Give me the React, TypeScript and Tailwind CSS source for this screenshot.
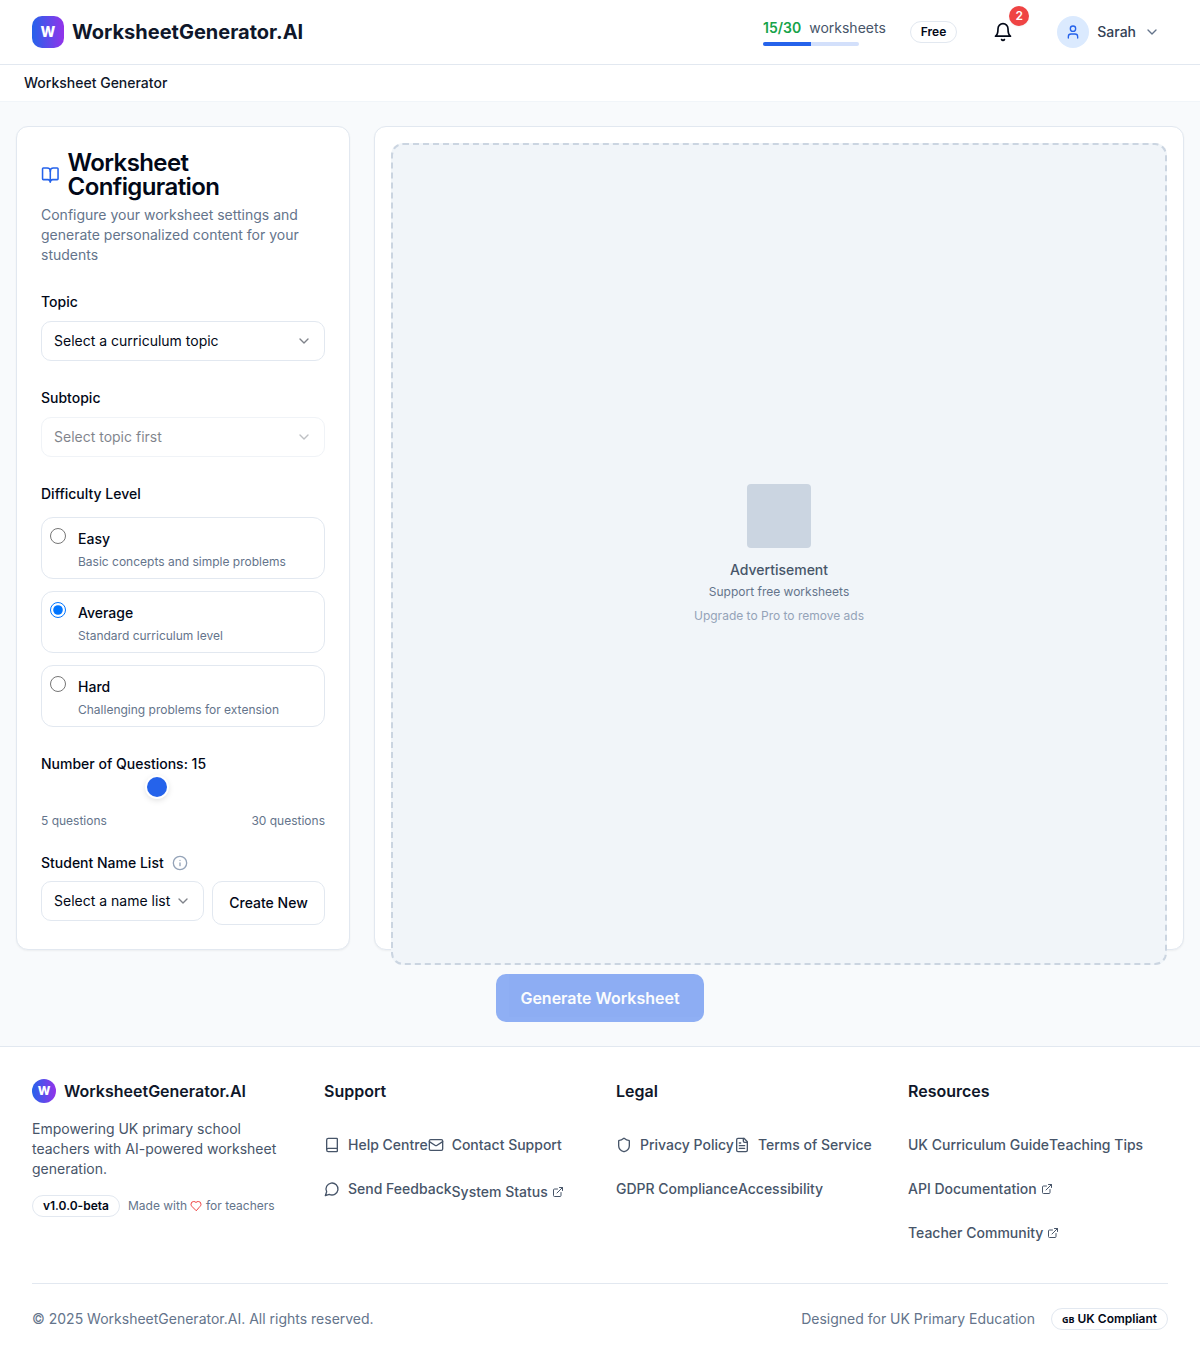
import React from "react";
import { Book, BookOpen, ChevronDown, ExternalLink, Info, Shield, User } from "lucide-react";

const levels = [
  { name: "Easy", text: "Basic concepts and simple problems" },
  { name: "Average", text: "Standard curriculum level" },
  { name: "Hard", text: "Challenging problems for extension" },
];

function Icon({ paths, className = "size-4", children }: { paths: string[]; className?: string; children?: React.ReactNode }) {
  return (
    <svg viewBox="0 0 24 24" fill="none" stroke="currentColor" strokeWidth={2} strokeLinecap="round" strokeLinejoin="round" className={className}>
      {children}
      {paths.map((d) => (
        <path key={d} d={d} />
      ))}
    </svg>
  );
}

const BellIcon = () => <Icon className="size-5" paths={["M6 8a6 6 0 0 1 12 0c0 7 3 9 3 9H3s3-2 3-9", "M10.3 21a1.94 1.94 0 0 0 3.4 0"]} />;
const MessageIcon = () => <Icon paths={["M7.9 20A9 9 0 1 0 4 16.1L2 22Z"]} />;
const MailIcon = () => (
  <Icon paths={["m22 7-8.97 5.7a1.94 1.94 0 0 1-2.06 0L2 7"]}>
    <rect width="20" height="16" x="2" y="4" rx="2" />
  </Icon>
);
const FileIcon = () => (
  <Icon paths={["M15 2H6a2 2 0 0 0-2 2v16a2 2 0 0 0 2 2h12a2 2 0 0 0 2-2V7Z", "M14 2v4a2 2 0 0 0 2 2h4", "M10 9H8", "M16 13H8", "M16 17H8"]} />
);
const HeartIcon = () => (
  <Icon
    className="ml-[3px] mr-1 size-3 text-[#ef4444]"
    paths={["M19 14c1.49-1.46 3-3.21 3-5.5A5.5 5.5 0 0 0 16.5 3c-1.76 0-3 .5-4.5 2-1.5-1.5-2.74-2-4.5-2A5.5 5.5 0 0 0 2 8.5c0 2.3 1.5 4.05 3 5.5l7 7Z"]}
  />
);

function Pill({ children }: { children: React.ReactNode }) {
  return (
    <span className="inline-flex h-[22px] shrink-0 items-center whitespace-nowrap rounded-full border border-[#e2e8f0] px-2.5 text-xs font-semibold leading-4 text-[#020817]">
      {children}
    </span>
  );
}

function Select({ label, className = "" }: { label: string; className?: string }) {
  return (
    <button className={`flex h-10 items-center justify-between whitespace-nowrap rounded-[10px] border border-[#e2e8f0] bg-white px-3 text-sm ${className}`}>
      <span>{label}</span>
      <ChevronDown className="size-4 shrink-0 opacity-50" />
    </button>
  );
}

function FooterLink({ icon, external, className = "", children }: { icon?: React.ReactNode; external?: boolean; className?: string; children: React.ReactNode }) {
  return (
    <a className={`flex h-11 shrink-0 items-center whitespace-nowrap text-sm font-medium text-[#475569] ${className}`}>
      {icon && <span className="mr-2">{icon}</span>}
      {children}
      {external && <ExternalLink className="ml-1 size-3" />}
    </a>
  );
}

function FooterColumn({ title, children }: { title: string; children: React.ReactNode }) {
  return (
    <div>
      <h3 className="mb-5 text-base font-semibold leading-6 text-[#0f172a]">{title}</h3>
      {children}
    </div>
  );
}

export default function App() {
  return (
    <div className="flex min-h-[1362px] flex-col bg-[#f8fafc] font-['Inter',sans-serif] text-[#020817]">
      <header className="flex h-[65px] items-center justify-between border-b border-[#e2e8f0] bg-white pl-8 pr-10">
        <div className="flex items-center gap-2">
          <div className="flex size-8 items-center justify-center rounded-[10px] bg-[linear-gradient(to_right,#2563eb,#9333ea)] text-sm font-extrabold text-white">W</div>
          <span className="text-xl font-bold text-[#0f172a]">WorksheetGenerator.AI</span>
        </div>
        <div className="flex items-center">
          <div className="mr-6 flex flex-col gap-1">
            <div className="flex gap-2 text-sm">
              <span className="font-semibold text-[#16a34a]">15/30</span>
              <span className="text-[#475569]">worksheets</span>
            </div>
            <div className="h-1 w-24 overflow-hidden rounded-full bg-[#2563eb]/20">
              <div className="h-full w-1/2 bg-[#2563eb]" />
            </div>
          </div>
          <Pill>Free</Pill>
          <div className="relative ml-9 mr-[44px]">
            <BellIcon />
            <span className="absolute -top-4 left-4 flex size-5 items-center justify-center rounded-full bg-[#ef4444] text-xs font-semibold text-white shadow-xs">2</span>
          </div>
          <div className="flex items-center gap-2">
            <div className="flex size-8 items-center justify-center rounded-full bg-[#dbeafe]">
              <User className="size-4 text-[#2563eb]" />
            </div>
            <span className="text-sm font-medium text-[#334155]">Sarah</span>
            <ChevronDown className="size-4 text-[#64748b]" />
          </div>
        </div>
      </header>
      <nav className="flex h-[37px] items-center border-b border-[#f1f5f9] bg-white px-6 text-sm font-medium text-[#0f172a]">Worksheet Generator</nav>

      <main className="flex h-[944px] flex-col items-center px-4 pt-6">
        <div className="flex h-[824px] w-full gap-6">
          <section className="w-[334px] shrink-0 rounded-xl border border-[#e2e8f0] bg-white p-6 shadow-xs">
            <div className="flex items-center gap-2">
              <BookOpen className="h-5 w-[18.6px] shrink-0 text-[#2563eb]" />
              <h1 className="text-2xl font-semibold leading-none tracking-tight">Worksheet Configuration</h1>
            </div>
            <p className="mt-1.5 text-sm text-[#64748b]">Configure your worksheet settings and generate personalized content for your students</p>

            <div className="mt-[27px] text-sm font-medium">Topic</div>
            <Select label="Select a curriculum topic" className="mt-[9px] w-full" />
            <div className="mt-[27px] text-sm font-medium">Subtopic</div>
            <Select label="Select topic first" className="mt-[9px] w-full opacity-50" />

            <div className="mt-[27px] text-sm font-medium">Difficulty Level</div>
            <div className="mt-[13px] flex flex-col gap-3">
              {levels.map((level) => (
                <label key={level.name} className="flex h-[62px] rounded-xl border border-[#e2e8f0] pl-2 pt-2.5">
                  <input type="radio" name="level" defaultChecked={level.name === "Average"} className="mr-3 size-4" />
                  <span className="pt-px">
                    <span className="block text-sm font-medium">{level.name}</span>
                    <span className="mt-[5px] block text-xs leading-4 text-[#64748b]">{level.text}</span>
                  </span>
                </label>
              ))}
            </div>

            <div className="mt-[27px] text-sm font-medium">Number of Questions: 15</div>
            <div className="mt-[3px] flex h-5 pl-[106px]">
              <div className="size-5 rounded-full bg-[#2563eb] shadow-[0_0_0_2px_#fff,0_2px_6px_1px_rgba(0,0,0,0.15)]" />
            </div>
            <div className="mt-4 flex justify-between text-xs text-[#64748b]">
              <span>5 questions</span>
              <span>30 questions</span>
            </div>

            <div className="mt-6 flex items-center gap-2 text-sm font-medium">
              Student Name List <Info className="size-4 text-[#94a3b8]" />
            </div>
            <div className="mt-2 flex items-start gap-2">
              <Select label="Select a name list" className="w-[163px]" />
              <button className="h-11 flex-1 whitespace-nowrap rounded-[10px] border border-[#e2e8f0] text-sm font-medium">Create New</button>
            </div>
          </section>

          <section className="flex-1 rounded-xl border border-[#e2e8f0] bg-white p-4 shadow-xs">
            <div className="flex h-[822px] flex-col items-center justify-center rounded-xl border-2 border-dashed border-[#cbd5e1] bg-[#f1f5f9]">
              <div className="mb-3 size-16 rounded bg-[#cbd5e1]" />
              <p className="text-sm font-medium text-[#475569]">Advertisement</p>
              <p className="mt-1 text-xs text-[#64748b]">Support free worksheets</p>
              <p className="mt-2 text-xs text-[#94a3b8]">Upgrade to Pro to remove ads</p>
            </div>
          </section>
        </div>
        <button className="mt-6 h-12 w-52 shrink-0 rounded-[10px] bg-[#2563eb] text-base font-semibold text-white opacity-50">Generate Worksheet</button>
      </main>

      <footer className="flex-1 border-t border-[#e2e8f0] bg-white px-8 pt-8">
        <div className="grid h-[204px] grid-cols-4 gap-8">
          <div>
            <div className="flex items-center gap-2">
              <div className="flex size-6 items-center justify-center rounded-full bg-[linear-gradient(to_right,#2563eb,#9333ea)] text-xs font-extrabold text-white">W</div>
              <span className="text-base font-semibold text-[#0f172a]">WorksheetGenerator.AI</span>
            </div>
            <p className="mt-4 text-sm text-[#475569]">Empowering UK primary school teachers with AI-powered worksheet generation.</p>
            <div className="mt-4 flex items-center gap-2">
              <Pill>v1.0.0-beta</Pill>
              <span className="flex items-center whitespace-nowrap text-xs text-[#64748b]">
                Made with <HeartIcon /> for teachers
              </span>
            </div>
          </div>
          <FooterColumn title="Support">
            <div className="flex">
              <FooterLink icon={<Book className="size-4" />}>Help Centre</FooterLink>
              <FooterLink icon={<MailIcon />}>Contact Support</FooterLink>
            </div>
            <div className="flex">
              <FooterLink icon={<MessageIcon />}>Send Feedback</FooterLink>
              <FooterLink external className="mt-[3px]">System Status</FooterLink>
            </div>
          </FooterColumn>
          <FooterColumn title="Legal">
            <div className="flex">
              <FooterLink icon={<Shield className="size-4" />}>Privacy Policy</FooterLink>
              <FooterLink icon={<FileIcon />}>Terms of Service</FooterLink>
            </div>
            <div className="flex">
              <FooterLink>GDPR Compliance</FooterLink>
              <FooterLink>Accessibility</FooterLink>
            </div>
          </FooterColumn>
          <FooterColumn title="Resources">
            <div className="flex">
              <FooterLink>UK Curriculum Guide</FooterLink>
              <FooterLink>Teaching Tips</FooterLink>
            </div>
            <FooterLink external>API Documentation</FooterLink>
            <FooterLink external>Teacher Community</FooterLink>
          </FooterColumn>
        </div>
        <div className="flex h-[71px] items-center justify-between border-t border-[#e2e8f0] text-sm text-[#64748b]">
          <span>© 2025 WorksheetGenerator.AI. All rights reserved.</span>
          <div className="flex items-center gap-4">
            <span>Designed for UK Primary Education</span>
            <Pill>
              <span className="flex items-baseline gap-[3px]">
                <span className="font-['Noto_Sans',sans-serif] text-[9px] font-bold leading-none">GB</span>
                <span>UK Compliant</span>
              </span>
            </Pill>
          </div>
        </div>
      </footer>
    </div>
  );
}
